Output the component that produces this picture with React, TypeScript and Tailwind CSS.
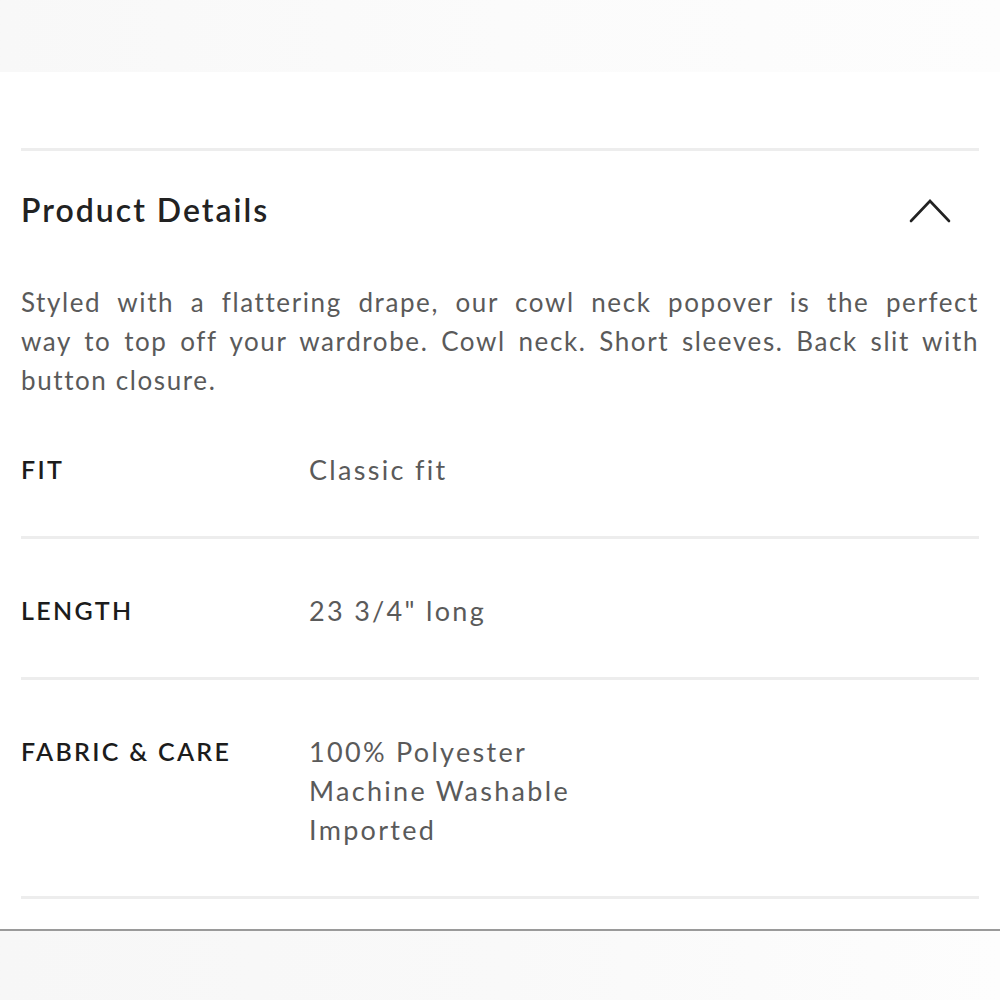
const rows = [
  { label: "FIT", values: ["Classic fit"] },
  { label: "LENGTH", values: ['23 3/4" long'] },
  { label: "FABRIC & CARE", values: ["100% Polyester", "Machine Washable", "Imported"] },
];

const Chevron = () => (
  <svg width="44" height="30" viewBox="0 0 44 30" fill="none" className="mr-[27px]">
    <polyline points="3,26 22,6 41,26" stroke="#222" strokeWidth="2.6" strokeLinecap="round" strokeLinejoin="miter" />
  </svg>
);

const App = () => {
  return (
    <div className="w-[1000px] h-[1000px] flex flex-col bg-white overflow-hidden font-['Lato','Liberation_Sans',sans-serif]">
      {/* top band */}
      <div className="h-[72px] bg-gradient-to-r from-[#f8f8f8] via-[#fbfbfb] to-[#fdfdfd]" />

      <div className="flex-1 px-[21px] pt-[76px]">
        <div className="h-[3px] bg-[#ededed]" />

        {/* header */}
        <div className="flex items-center justify-between pt-[39px]">
          <h2 className="text-[32px] leading-[40px] font-semibold text-[#222] tracking-[2px]">Product Details</h2>
          <Chevron />
        </div>

        {/* description */}
        <div className="mt-[53px] text-[26px] leading-[39px] text-[#5a5a5a] tracking-[1.6px]">
          <div className="text-justify [text-align-last:justify]">Styled with a flattering drape, our cowl neck popover is the perfect</div>
          <div className="text-justify [text-align-last:justify]">way to top off your wardrobe. Cowl neck. Short sleeves. Back slit with</div>
          <div>button closure.</div>
        </div>

        {/* specs */}
        <div className="mt-[50px]">
          {rows.map((row, i) => (
            <div key={row.label}>
              <div className={`flex ${i === 0 ? "" : "pt-[52px]"} pb-[47px]`}>
                <div className="w-[288px] text-[25px] leading-[39px] font-semibold text-[#1c1c1c] tracking-[2.3px]">{row.label}</div>
                <div className="text-[27px] leading-[39px] text-[#5a5a5a] tracking-[2.3px]">
                  {row.values.map((v) => (
                    <div key={v}>{v}</div>
                  ))}
                </div>
              </div>
              <div className="h-[3px] bg-[#ededed]" />
            </div>
          ))}
        </div>
      </div>

      {/* bottom band */}
      <div className="h-[2px] bg-[#9a9a9a]" />
      <div className="h-[69px] bg-gradient-to-r from-[#f7f7f7] via-[#f9f9f9] to-[#fdfdfd]" />
    </div>
  );
};

export default App;
